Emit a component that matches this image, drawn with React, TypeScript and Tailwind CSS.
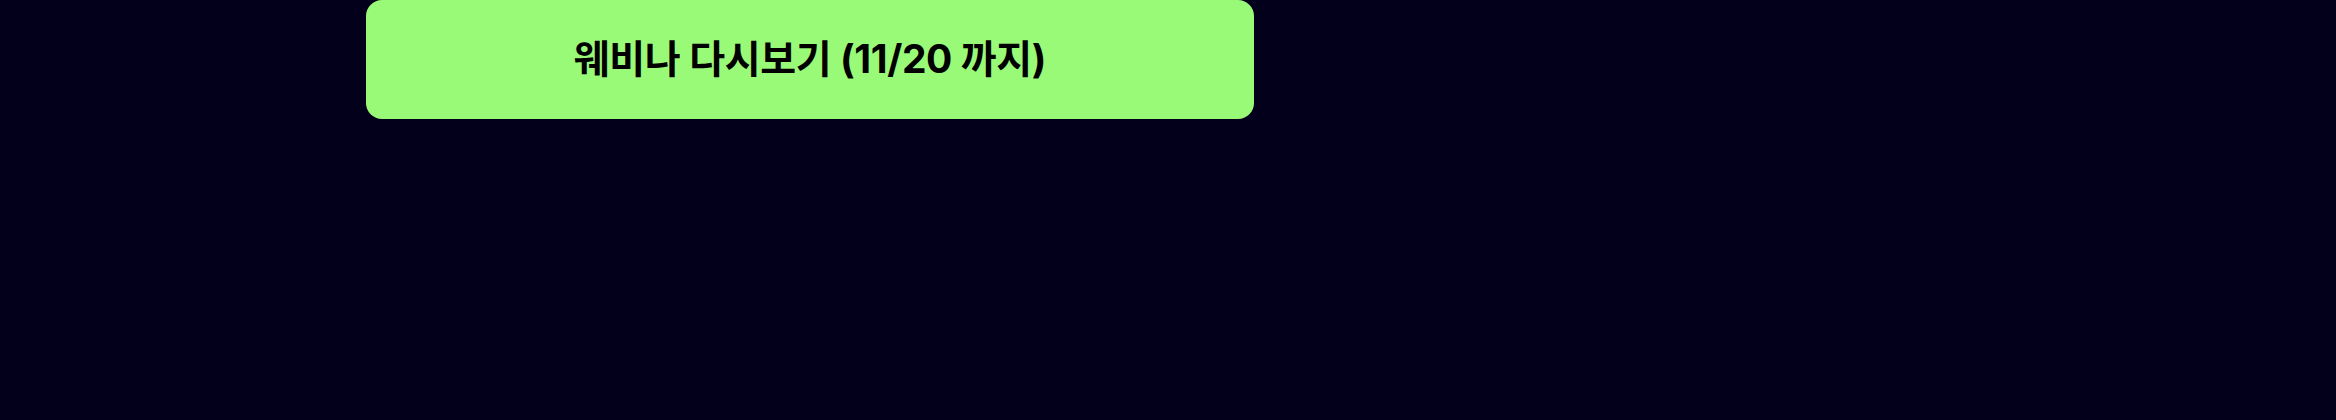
export default function App() {
  return (
    <div className="min-h-[420px] w-full bg-[#03001c]">
      <div className="pl-[366px]">
        <button
          type="button"
          className="flex h-[119px] w-[888px] items-center justify-center rounded-2xl bg-[#99fa78] text-[39px] font-bold tracking-[-0.01em] text-black"
          style={{ fontFamily: 'Inter, "Noto Sans CJK KR", sans-serif' }}
        >
          웨비나 다시보기 (11/20 까지)
        </button>
      </div>
    </div>
  );
}
